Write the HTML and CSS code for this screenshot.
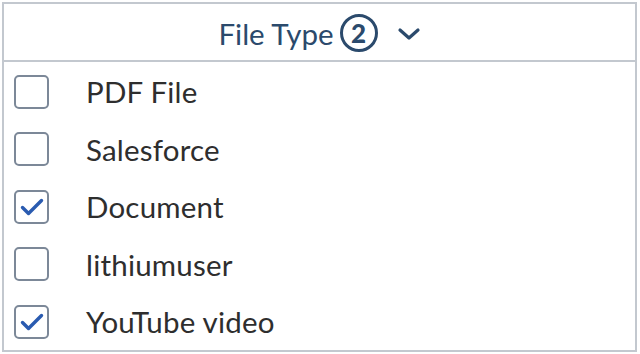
FILE: index.html
```html
<!DOCTYPE html>
<html>
<head>
<meta charset="utf-8">
<link rel="stylesheet" href="styles.css">
</head>
<body>
<div class="panel">
  <div class="header">
    <span class="title">File Type</span>
    <span class="badge">2</span>
    <svg class="chevron" width="24" height="14" viewBox="0 0 24 14"><path d="M3 3 L12 11 L21 3" fill="none" stroke="#2b4a6c" stroke-width="3.2" stroke-linecap="round" stroke-linejoin="round"/></svg>
  </div>
  <ul class="list">
    <li class="row"><span class="box"></span><span class="label">PDF File</span></li>
    <li class="row"><span class="box"></span><span class="label">Salesforce</span></li>
    <li class="row"><span class="box checked"><svg width="26" height="20" viewBox="0 0 26 20"><path d="M3.5 10.5 L9.5 16.5 L22.5 3.5" fill="none" stroke="#2a5bb0" stroke-width="3.4" stroke-linecap="round" stroke-linejoin="round"/></svg></span><span class="label">Document</span></li>
    <li class="row"><span class="box"></span><span class="label">lithiumuser</span></li>
    <li class="row"><span class="box checked"><svg width="26" height="20" viewBox="0 0 26 20"><path d="M3.5 10.5 L9.5 16.5 L22.5 3.5" fill="none" stroke="#2a5bb0" stroke-width="3.4" stroke-linecap="round" stroke-linejoin="round"/></svg></span><span class="label">YouTube video</span></li>
  </ul>
</div>
</body>
</html>
```

FILE: styles.css
```css
html, body {
  margin: 0;
  padding: 0;
  background: #ffffff;
}
body {
  padding: 2px 3px 2px 2px;
  font-family: Lato, "Open Sans", sans-serif;
}
.panel {
  box-sizing: border-box;
  width: 635px;
  height: 350px;
  border: 2px solid #c3c8cf;
  overflow: hidden;
}
.header {
  box-sizing: border-box;
  height: 58px;
  border-bottom: 2px solid #c3c8cf;
  display: flex;
  align-items: center;
  justify-content: center;
  padding-top: 4px;
  color: #2b4a6c;
}
.title {
  font-size: 29.5px;
  line-height: 34px;
}
.badge {
  box-sizing: border-box;
  width: 38px;
  height: 38px;
  border: 3px solid #2b4a6c;
  border-radius: 50%;
  display: flex;
  align-items: center;
  justify-content: center;
  font-size: 26px;
  font-weight: 900;
  margin-left: 6px;
  margin-top: -2px;
}
.chevron {
  margin-left: 19px;
}
.list {
  list-style: none;
  margin: 0;
  padding: 1px 0 0 0;
}
.row {
  height: 57.5px;
  display: flex;
  align-items: center;
  padding-left: 10px;
}
.box {
  box-sizing: border-box;
  width: 35px;
  height: 34px;
  border: 2px solid #7c8898;
  border-radius: 5px;
  display: flex;
  align-items: center;
  justify-content: center;
  flex: none;
}
.label {
  margin-left: 37px;
  font-size: 29.5px;
  color: #2e2e2e;
  letter-spacing: 0.2px;
}
```
